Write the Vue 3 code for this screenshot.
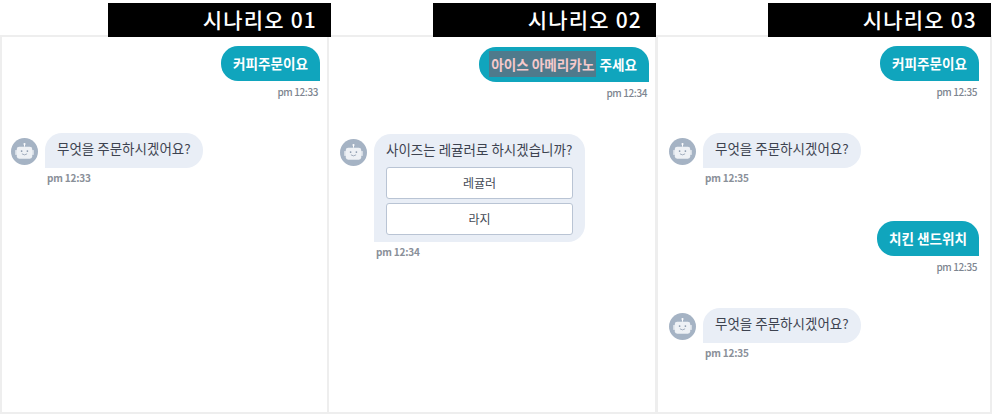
<template>
  <div class="page">
    <section v-for="s in scenarios" :key="s.title" class="scenario" :class="s.id">
      <h2 class="tag">{{ s.title }}</h2>
      <div class="chat">
        <div v-for="(m, i) in s.messages" :key="i" class="msg" :class="m.from">
          <template v-if="m.from === 'user'">
            <div class="bubble user-bubble">
              <mark v-if="m.mark" class="hl">{{ m.mark }}</mark>
              {{ m.text }}
            </div>
          </template>
          <div v-else class="bot-row">
            <svg class="avatar" viewBox="0 0 28 28" aria-hidden="true">
              <circle cx="14" cy="14" r="14" fill="#a5b3c4" />
              <circle cx="14" cy="6.2" r="1.1" fill="#fff" />
              <rect x="13.5" y="6.5" width="1" height="2.5" fill="#fff" />
              <rect x="6" y="9" width="16" height="12.5" rx="2.5" fill="#eef1f5" />
              <rect x="4.5" y="12.5" width="1.5" height="5" fill="#eef1f5" />
              <rect x="22" y="12.5" width="1.5" height="5" fill="#eef1f5" />
              <circle cx="11" cy="13.6" r="0.9" fill="#8b9aad" />
              <circle cx="17" cy="13.6" r="0.9" fill="#8b9aad" />
              <path d="M11.3 16.4q2.7 2.2 5.4 0" fill="none" stroke="#8b9aad" stroke-width="0.8" />
            </svg>
            <div class="bubble bot-bubble">
              <div>{{ m.text }}</div>
              <div v-if="m.options" class="options">
                <button v-for="o in m.options" :key="o" type="button" class="option">{{ o }}</button>
              </div>
            </div>
          </div>
          <div class="time">{{ m.time }}</div>
        </div>
      </div>
    </section>
  </div>
</template>

<script setup>
const ask = '무엇을 주문하시겠어요?'

const scenarios = [
  {
    id: 'first',
    title: '시나리오 01',
    messages: [
      { from: 'user', text: '커피주문이요', time: 'pm 12:33' },
      { from: 'bot', text: ask, time: 'pm 12:33' },
    ],
  },
  {
    id: 'second',
    title: '시나리오 02',
    messages: [
      { from: 'user', mark: '아이스 아메리카노', text: '주세요', time: 'pm 12:34' },
      {
        from: 'bot',
        text: '사이즈는 레귤러로 하시겠습니까?',
        options: ['레귤러', '라지'],
        time: 'pm 12:34',
      },
    ],
  },
  {
    id: 'third',
    title: '시나리오 03',
    messages: [
      { from: 'user', text: '커피주문이요', time: 'pm 12:35' },
      { from: 'bot', text: ask, time: 'pm 12:35' },
      { from: 'user', text: '치킨 샌드위치', time: 'pm 12:35' },
      { from: 'bot', text: ask, time: 'pm 12:35' },
    ],
  },
]
</script>

<style scoped>
.page {
  display: flex;
  width: 992px;
  height: 415px;
  background: #fff;
  font-family: "Noto Sans CJK KR", "Noto Sans", sans-serif;
  overflow: hidden;
}

.scenario {
  display: flex;
  flex-direction: column;
  flex-shrink: 0;
  padding-top: 3px;
  box-sizing: border-box;
}

.first {
  width: 329px;
}

.second {
  width: 330px;
  margin-left: -2px;
}

.third {
  width: 336px;
  margin-left: -1px;
}

.tag {
  position: relative;
  z-index: 1;
  align-self: flex-end;
  width: 223px;
  height: 34px;
  margin: 0 1px -2px 0;
  padding-right: 14px;
  box-sizing: border-box;
  background: #000;
  color: #fff;
  font-size: 21px;
  font-weight: 500;
  line-height: 33px;
  text-align: right;
  letter-spacing: 1.2px;
}

.first .tag {
  margin-right: -2px;
}

.chat {
  flex: 1;
  margin-bottom: 1px;
  padding: 9px 6px 0 11px;
  border: 2px solid #eeeeee;
  display: flex;
  flex-direction: column;
  gap: 34px;
  min-height: 0;
}

.first .chat {
  padding-left: 9px;
  padding-right: 7px;
}

.second .chat {
  padding-top: 10px;
}

.third .chat {
  padding-right: 11px;
}

.msg {
  display: flex;
  flex-direction: column;
}

.msg.user {
  align-items: flex-end;
}

.bubble {
  box-sizing: border-box;
  font-size: 13.6px;
  line-height: 19px;
}

.user-bubble {
  min-height: 35px;
  padding: 8px 12px;
  background: #10a5bd;
  color: #fff;
  font-weight: 700;
  border-radius: 17px 17px 0 17px;
}

.hl {
  margin-left: -2px;
  padding: 3px 2px;
  background: #4f7a8c;
  color: #f6c9cb;
}

.msg.user .time {
  margin: 3px 2px 0 0;
  letter-spacing: -0.4px;
}

.bot-row {
  display: flex;
  align-items: flex-start;
  gap: 7px;
}

.avatar {
  width: 27px;
  height: 27px;
  margin-top: 5px;
  flex-shrink: 0;
}

.bot-bubble {
  min-height: 35px;
  padding: 6px 12px 7px;
  background: #e9eef6;
  color: #3d4350;
  font-size: 13.5px;
  border-radius: 17px 17px 17px 0;
}

.options {
  display: flex;
  flex-direction: column;
  gap: 4px;
  margin-top: 8px;
}

.option {
  width: 187px;
  height: 32px;
  padding: 0 0 2px;
  background: #fff;
  border: 1px solid #b9c4d4;
  border-radius: 3px;
  color: #444a55;
  font-family: inherit;
  font-size: 12px;
}

.time {
  color: #7d8590;
  font-size: 10px;
  font-weight: 500;
  line-height: 15px;
}

.msg.bot .time {
  margin: 2px 0 2px 36px;
  font-weight: 700;
  color: #8a9099;
  letter-spacing: -0.2px;
}
</style>
